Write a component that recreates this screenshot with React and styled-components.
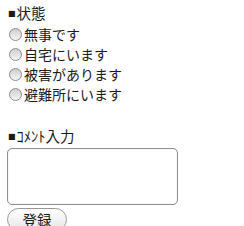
import styled, { createGlobalStyle } from "styled-components";

const GlobalStyle = createGlobalStyle`
  html, body {
    margin: 0;
    padding: 0;
    background: #fff;
  }
  body {
    font-family: "Noto Sans CJK JP", "Noto Sans", sans-serif;
    color: #1a1a1a;
  }
`;

const Page = styled.form`
  display: flex;
  flex-direction: column;
  padding: 3px 0 0 7px;
`;

const Heading = styled.div`
  display: flex;
  align-items: center;
  height: 20px;
  font-size: 14.5px;
  line-height: 20px;
  margin-top: ${(p) => p.$top || 0}px;
  margin-bottom: 1px;
`;

const Mark = styled.span`
  font-family: "DejaVu Sans", sans-serif;
  font-size: 8px;
  margin: 1px 1px 0 1px;
`;

const Option = styled.label`
  display: flex;
  align-items: center;
  height: 20px;
  font-size: 14px;
  line-height: 20px;
`;

const Radio = styled.input.attrs({ type: "radio" })`
  appearance: none;
  width: 13px;
  height: 13px;
  margin: 0 2px 0 2px;
  border-radius: 50%;
  border: 1px solid #8c8c8c;
  background: linear-gradient(#cdcdcd, #f6f6f6);
  box-sizing: border-box;
`;

const Comment = styled.textarea`
  width: 171px;
  height: 57px;
  box-sizing: border-box;
  margin: 1px 0 0 0;
  border: 1px solid #8f8f8f;
  border-radius: 5px;
  box-shadow: inset 0 0 1px rgba(0, 0, 0, 0.25);
  resize: none;
  font-family: inherit;
`;

const Submit = styled.button`
  width: 60px;
  height: 23px;
  margin-top: 3px;
  padding: 0;
  border: 1px solid #999;
  border-radius: 12px;
  background: linear-gradient(#ffffff, #e6e6e6);
  font-family: inherit;
  font-size: 14.5px;
  line-height: 21px;
  color: #1a1a1a;
`;

const options = ["無事です", "自宅にいます", "被害があります", "避難所にいます"];

export default function App() {
  return (
    <>
      <GlobalStyle />
      <Page onSubmit={(e) => e.preventDefault()}>
        <Heading>
          <Mark>■</Mark>状態
        </Heading>
        {options.map((o) => (
          <Option key={o}>
            <Radio name="status" value={o} />
            {o}
          </Option>
        ))}
        <Heading $top={22}>
          <Mark>■</Mark>ｺﾒﾝﾄ入力
        </Heading>
        <Comment />
        <Submit type="submit">登録</Submit>
      </Page>
    </>
  );
}
